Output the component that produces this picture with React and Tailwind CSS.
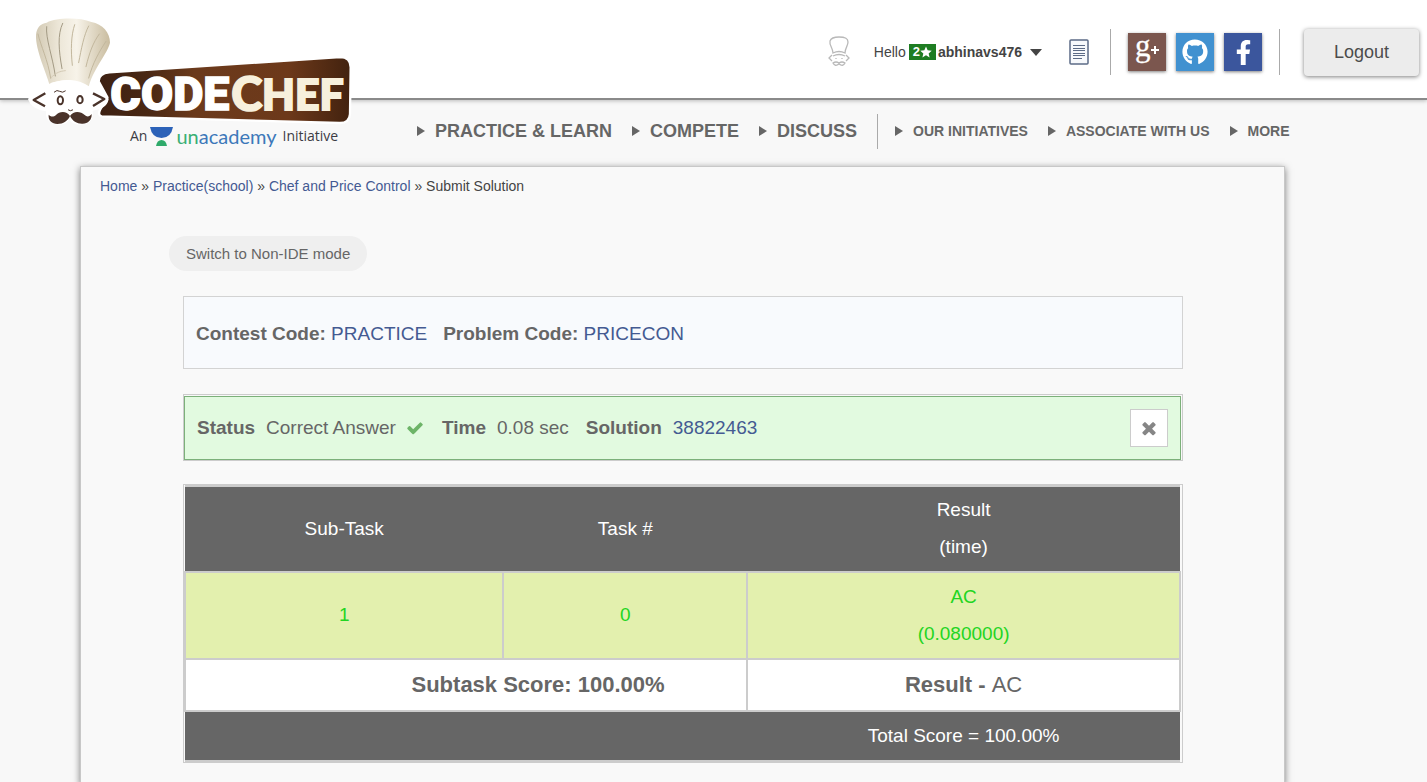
import React from "react";
import { FaFacebookF, FaGithub } from "react-icons/fa";

function Logo() {
  return (
    <a href="#home" aria-label="CodeChef" className="absolute left-5 top-2.5 block w-[340px]">
      <svg viewBox="0 0 1020 348" className="block h-[116px] w-[340px]" aria-hidden="true">
        <defs>
          <linearGradient id="plaque" x1="0" y1="0" x2="1" y2="0">
            <stop offset="0" stopColor="#3d2113" />
            <stop offset="0.2" stopColor="#4a2814" />
            <stop offset="0.38" stopColor="#6b3a1c" />
            <stop offset="0.75" stopColor="#6d391a" />
            <stop offset="1" stopColor="#42220f" />
          </linearGradient>
          <linearGradient id="hat" x1="0" y1="0" x2="1" y2="0">
            <stop offset="0" stopColor="#d3cab4" />
            <stop offset="0.3" stopColor="#ece6d7" />
            <stop offset="0.55" stopColor="#f7f3e9" />
            <stop offset="1" stopColor="#c9bc9f" />
          </linearGradient>
        </defs>
        <path
          d="M268 187 L960 141 Q992 141 992 172 L990 312 Q988 340 958 339 L245 319 Q233 316 240 300 L262 262 L236 214 Q236 190 268 187Z"
          fill="url(#plaque)"
          stroke="#fff"
          strokeWidth="7"
        />
        <path
          d="M88 222 C80 190 46 120 48 74 C50 52 62 40 80 38 C112 22 178 22 214 36 C248 42 270 68 270 98 C262 132 216 182 206 232 Q150 196 88 222Z"
          fill="url(#hat)"
        />
        <path d="M88 222 Q150 196 206 232 L208 256 L86 256Z" fill="#fff" />
        <g fill="none" stroke="#c2b79d" strokeWidth="3" strokeLinecap="round">
          <path d="M92 205 C84 150 62 108 54 72" />
          <path d="M106 198 C98 140 76 84 80 50 M126 176 C116 120 112 74 128 40" stroke="#a39a84" />
          <path d="M157 166 C152 120 153 76 164 44" />
          <path d="M176 158 C184 116 192 74 206 48" />
          <path d="M198 170 C208 128 220 96 238 72" />
          <path d="M206 204 C218 160 238 124 258 94" />
          <path d="M92 204 C110 186 120 184 136 182" stroke="#d4cab5" />
        </g>
        <path
          d="M24 268 Q34 244 84 232 Q148 188 212 232 Q262 244 266 268 Q260 298 218 302 Q224 340 182 344 Q150 342 148 326 Q144 344 112 344 Q74 338 78 304 Q34 298 24 268Z"
          fill="#fff"
        />
        <g fill="none" stroke="#4a332a" strokeLinecap="round" strokeLinejoin="round">
          <path d="M76 250 L41 270 L75 289 M219 250 L253 267 L219 288" strokeWidth="7" strokeLinecap="butt" />
          <path d="M103 246 Q111 238 119 244 Q128 250 136 243" strokeWidth="3" />
          <path d="M145 300 Q151 305 158 300" strokeWidth="3" />
          <ellipse cx="121" cy="271" rx="8" ry="12" strokeWidth="6" />
          <ellipse cx="180" cy="269" rx="8" ry="11" strokeWidth="6" />
        </g>
        <path
          d="M150 318 C140 302 118 304 108 315 C100 322 91 320 86 314 C84 332 96 341 112 342 C130 342 144 332 150 318 C158 334 172 342 188 341 C204 341 216 330 215 312 C209 320 201 322 194 315 C182 304 160 302 150 318Z"
          fill="#4a332a"
        />
        <text x="271" y="300" fontFamily="Roboto, sans-serif" fontWeight="900" fontSize="140" fill="#fff" stroke="#fff" strokeWidth="4">
          CODE
        </text>
        <text x="634" y="302" fontFamily="Lato, sans-serif" fontWeight="900" fontSize="142" fill="#f7f0dc" stroke="#f7f0dc" strokeWidth="5">
          C
        </text>
        <text x="726" y="301" fontFamily="Lato, sans-serif" fontWeight="900" fontSize="128" fill="#f7f0dc" stroke="#f7f0dc" strokeWidth="6">
          HEF
        </text>
      </svg>
      <span className="flex h-5 items-center pl-[110px] font-['Open_Sans',sans-serif] text-sm text-[#3c3c44]">
        An
        <svg viewBox="0 0 23 20" className="mx-[3px] h-5 w-[23px]" aria-hidden="true">
          <path d="M0 1H23Q21 12 11.500 12Q2 12 0 1Z" fill="#2c62b8" />
          <path d="M6 20Q7 14 11.500 14Q16 14 17 20Z" fill="#2faa6a" />
        </svg>
        <span className="mr-1.5 font-['Lato',sans-serif] text-xl leading-5 text-[#3d78ba]">
          <span className="text-[#3aaf74]">un</span>academy
        </span>
        Initiative
      </span>
    </a>
  );
}

function ChefIcon() {
  return (
    <svg viewBox="0 0 22 32" className="h-8 w-[22px]" fill="none" stroke="#b9b9b9" strokeWidth="1.300" aria-hidden="true">
      <path d="M5 17C5 12 1 9 2 5C3 2 6 1 11 1C16 1 20 2 20 6C20 10 17 12 17 17Q11 14 5 17Z" />
      <path d="M5 20Q11 17 17 20M4 19L1 22L4 25M18 19L21 22L18 25" />
      <path d="M8 22V23M14 22V23" />
      <path d="M11 27Q8 25 5 27Q7 31 11 28Q15 31 17 27Q14 25 11 27Z" />
    </svg>
  );
}

function NoteIcon() {
  return (
    <svg viewBox="0 0 20 26" className="h-[26px] w-5" fill="none" stroke="#5c6b86" aria-hidden="true">
      <rect x="1" y="1" width="18" height="24" rx="1" strokeWidth="1.500" fill="#f7f9fc" />
      <path d="M4 6.500H16M4 9.500H16M4 11.500H16M4 14.500H16M4 16.500H16M4 19.500H13" />
    </svg>
  );
}

function CheckIcon() {
  return (
    <svg viewBox="0 0 1792 1792" className="-mx-px size-[18px]" fill="#6db468" role="img" aria-label="Correct">
      <path d="M1671 566q0 40-28 68l-724 724-136 136q-28 28-68 28t-68-28l-136-136-362-362q-28-28-28-68t28-68l136-136q28-28 68-28t68 28l294 295 656-657q28-28 68-28t68 28l136 136q28 28 28 68z" />
    </svg>
  );
}

function CloseIcon() {
  return (
    <svg viewBox="0 0 1792 1792" className="size-5" fill="#868686" aria-hidden="true">
      <path d="M1490 1322q0 40-28 68l-136 136q-28 28-68 28t-68-28l-294-294-294 294q-28 28-68 28t-68-28l-136-136q-28-28-28-68t28-68l294-294-294-294q-28-28-28-68t28-68l136-136q28-28 68-28t68 28l294 294 294-294q28-28 68-28t68 28l136 136q28 28 28 68t-28 68l-294 294 294 294q28 28 28 68z" />
    </svg>
  );
}

function Arrow() {
  return (
    <svg viewBox="0 0 8 10" className="h-2.5 w-2 shrink-0" fill="#666" aria-hidden="true">
      <path d="M0 0L8 5L0 10Z" />
    </svg>
  );
}

function NavLink({ children, large }) {
  return (
    <a
      href="#nav"
      className={
        large
          ? "flex items-center gap-2.5 whitespace-nowrap text-lg font-bold"
          : "flex items-center gap-2.5 whitespace-nowrap text-sm font-bold"
      }
    >
      <Arrow />
      {children}
    </a>
  );
}

const social = "flex size-[38px] items-center justify-center text-white shadow-[0_1px_3px_rgba(0,0,0,0.5)]";
const link = "text-[#445a92]";

export default function App() {
  return (
    <div className="min-h-screen overflow-x-hidden bg-[#f8f8f8] font-['Liberation_Sans',Arial,sans-serif] text-[#666]">
      <header className="relative">
        <div className="flex h-[100px] items-center justify-end border-b-2 border-[#8a8a8a] bg-white pr-2 pt-1.5 shadow-[0_1px_4px_rgba(0,0,0,0.25)]">
          <ChefIcon />
          <button type="button" className="ml-6 flex items-center text-sm text-[#444]">
            Hello
            <span className="ml-[3px] mr-0.5 flex h-4 items-center bg-[#1e7d22] px-1 text-[13px] font-bold text-white">
              2
              <svg viewBox="0 0 24 24" className="size-3" fill="#fff" aria-hidden="true">
                <path d="M12 1l3.300 7.700 8.200.7-6.200 5.500 1.900 8.100L12 18.700 4.800 23l1.900-8.100L.5 9.400l8.200-.7z" />
              </svg>
            </span>
            <b>abhinavs476</b>
            <svg viewBox="0 0 12 7" className="ml-2 h-[7px] w-3" fill="#444" aria-hidden="true">
              <path d="M0 0H12L6 7Z" />
            </svg>
          </button>
          <a href="#notes" aria-label="Notes" className="ml-[27px]">
            <NoteIcon />
          </a>
          <div className="ml-[21px] flex h-[46px] items-center gap-2.5 border-x border-[#aaa] px-[17px]">
            <a href="#google" aria-label="Google+" className={`${social} bg-[#7b564e]`}>
              <svg viewBox="0 0 38 38" className="size-full overflow-visible" fill="#fff" aria-hidden="true">
                <text x="7" y="23" fontFamily="Liberation Serif, serif" fontSize="31" stroke="#fff" strokeWidth="0.300">g</text>
                <path d="M23 16H26V13H28V16H31V18H28V21H26V18H23Z" />
              </svg>
            </a>
            <a href="#github" aria-label="GitHub" className={`${social} bg-[#4191d0]`}>
              <FaGithub className="size-[26px]" />
            </a>
            <a href="#facebook" aria-label="Facebook" className={`${social} bg-[#3b569d]`}>
              <FaFacebookF className="size-[25px]" />
            </a>
          </div>
          <button
            type="button"
            className="ml-6 h-[47px] w-[115px] rounded-sm bg-[#ececec] text-lg text-[#4c4c4c] shadow-[0_1px_4px_rgba(0,0,0,0.5)]"
          >
            Logout
          </button>
        </div>
        <nav className="flex h-[66px] items-center pb-1 pl-[417px]">
          <div className="flex gap-5">
            <NavLink large>PRACTICE &amp; LEARN</NavLink>
            <NavLink large>COMPETE</NavLink>
            <NavLink large>DISCUSS</NavLink>
          </div>
          <div className="ml-5 flex h-[35px] gap-5 border-l border-[#aaa] pl-[17px]">
            <NavLink>OUR INITIATIVES</NavLink>
            <NavLink>ASSOCIATE WITH US</NavLink>
            <NavLink>MORE</NavLink>
          </div>
        </nav>
        <Logo />
      </header>

      <main className="ml-20 mr-[142px] min-h-[616px] border border-[#c8c8c8] bg-[#f9f9f9] pb-5 shadow-[0_2px_7px_rgba(0,0,0,0.5)]">
        <nav aria-label="Breadcrumb" className="px-[19px] pt-[9px] text-sm leading-5 text-[#444]">
          <a href="#home" className={link}>Home</a> » <a href="#practice" className={link}>Practice(school)</a> »{" "}
          <a href="#problem" className={link}>Chef and Price Control</a> » Submit Solution
        </nav>
        <button type="button" className="ml-[88px] mt-10 block h-[35px] rounded-full bg-[#efefef] px-[17px] pt-0.5 text-[15px]">
          Switch to Non-IDE mode
        </button>

        <div className="ml-[102px] mr-[101px] mt-[25px] flex flex-col gap-[25px] text-[19px]">
          <section className="flex h-[73px] items-center gap-4 border border-[#d3d3d3] bg-[#f8fafd] px-3 pt-1">
            <p>
              <b>Contest Code:</b> <a href="#contest" className={link}>PRACTICE</a>
            </p>
            <p>
              <b>Problem Code:</b> <a href="#problem" className={link}>PRICECON</a>
            </p>
          </section>

          <section className="border border-[#ccc] pr-px pt-px">
            <div className="flex h-16 items-center gap-[11px] border border-[#7cb07a] bg-[#e2fae0] px-3">
              <b>Status</b>
              <span>Correct Answer</span>
              <CheckIcon />
              <b className="ml-2">Time</b>
              <span>0.08 sec</span>
              <b className="ml-1.5">Solution</b>
              <a href="#solution" className={link}>38822463</a>
              <button
                type="button"
                aria-label="Close"
                className="ml-auto flex size-[38px] items-center justify-center border border-[#ccc] bg-white"
              >
                <CloseIcon />
              </button>
            </div>
          </section>

          <section className="-mt-0.5 border border-[#ccc] pr-px">
            <table className="w-full table-fixed border-collapse text-center leading-[37px] [&_td]:pb-0.5 [&_th]:pb-0.5">
              <colgroup>
                <col className="w-[32%]" />
                <col className="w-[24.5%]" />
                <col />
              </colgroup>
              <thead>
                <tr className="h-[86px] border-y-2 border-[#ccc] bg-[#666] text-white">
                  <th scope="col" className="font-normal">Sub-Task</th>
                  <th scope="col" className="font-normal">Task #</th>
                  <th scope="col" className="font-normal">Result<br />(time)</th>
                </tr>
              </thead>
              <tbody>
                <tr className="h-[87px] bg-[#e3f0ae] text-[#22d522]">
                  <td className="border-2 border-[#ccc]">1</td>
                  <td className="border-2 border-[#ccc]">0</td>
                  <td className="border-2 border-[#ccc]">AC<br />(0.080000)</td>
                </tr>
                <tr className="h-[52px] bg-white text-[22px]">
                  <td colSpan={2} className="border-2 border-[#ccc] pl-36">
                    <b>Subtask Score: 100.00%</b>
                  </td>
                  <td className="border-2 border-[#ccc]">
                    <b>Result - </b>AC
                  </td>
                </tr>
                <tr className="h-[50px] border-b-2 border-[#ccc] bg-[#666] text-white">
                  <td colSpan={2}></td>
                  <td>Total Score = 100.00%</td>
                </tr>
              </tbody>
            </table>
          </section>
        </div>
      </main>
    </div>
  );
}
